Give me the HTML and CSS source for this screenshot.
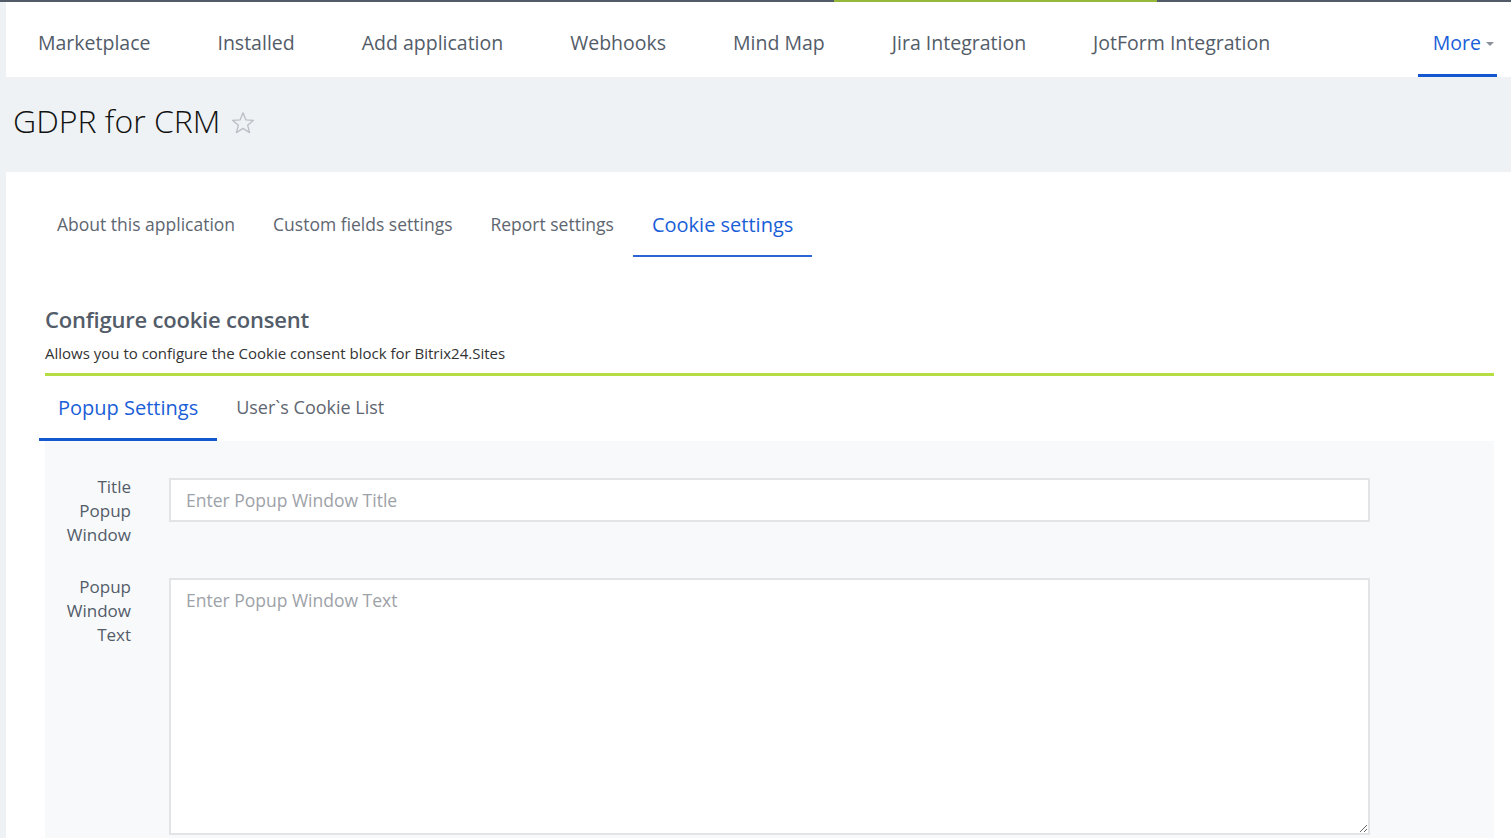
FILE: index.html
```html
<!DOCTYPE html>
<html lang="en">
<head>
<meta charset="utf-8">
<title>GDPR for CRM</title>
<link rel="stylesheet" href="styles.css">
</head>
<body>
<div class="topline"></div>
<nav class="topnav">
  <a class="nav-item">Marketplace</a>
  <a class="nav-item">Installed</a>
  <a class="nav-item">Add application</a>
  <a class="nav-item">Webhooks</a>
  <a class="nav-item">Mind Map</a>
  <a class="nav-item">Jira Integration</a>
  <a class="nav-item">JotForm Integration</a>
  <a class="nav-item nav-more">More<span class="caret"></span></a>
</nav>
<header class="page-head">
  <h1 class="page-title">GDPR for CRM</h1>
  <svg class="star" width="24" height="24" viewBox="0 0 24 24"><path d="M12 1.8l2.9 7.1 7.6.4-5.9 4.9 2 7.4L12 17.4l-6.6 4.2 2-7.4-5.9-4.9 7.6-.4z" fill="none" stroke="#b9bfc5" stroke-width="1.3" stroke-linejoin="round"/></svg>
</header>
<main class="panel">
  <div class="tabs">
    <a class="tab">About this application</a>
    <a class="tab">Custom fields settings</a>
    <a class="tab">Report settings</a>
    <a class="tab tab-active">Cookie settings</a>
  </div>
  <section class="section">
    <h2 class="section-title">Configure cookie consent</h2>
    <p class="section-desc">Allows you to configure the Cookie consent block for Bitrix24.Sites</p>
    <div class="subtabs">
      <a class="subtab subtab-active">Popup Settings</a>
      <a class="subtab">User`s Cookie List</a>
    </div>
    <div class="form">
      <div class="form-row">
        <label class="form-label">Title Popup Window</label>
        <input class="form-input" type="text" placeholder="Enter Popup Window Title">
      </div>
      <div class="form-row">
        <label class="form-label">Popup Window Text</label>
        <textarea class="form-textarea" placeholder="Enter Popup Window Text"></textarea>
      </div>
    </div>
  </section>
</main>
</body>
</html>
```

FILE: styles.css
```css
* { box-sizing: border-box; }
html, body { margin: 0; padding: 0; }
body {
  background: #eef2f4;
  font-family: "Open Sans", "Liberation Sans", sans-serif;
  color: #535c69;
  height: 838px;
  overflow: hidden;
}
.topline {
  height: 2px;
  background: linear-gradient(to right, #525c69 0, #525c69 834px, #95b83a 834px, #95b83a 1157px, #525c69 1157px);
}
.topnav {
  margin-left: 6px;
  height: 75px;
  background: #fff;
  display: flex;
  align-items: stretch;
  padding-left: 32px;
  padding-right: 14px;
  gap: 67px;
}
.nav-item {
  display: flex;
  align-items: center;
  font-size: 19.5px;
  color: #535c69;
  padding-top: 9px;
  border-bottom: 3px solid transparent;
  white-space: nowrap;
}
.nav-more {
  margin-left: auto;
  color: #1a5ed8;
  border-bottom-color: #1458d0;
  padding-left: 15px;
  padding-right: 3px;
}
.caret {
  display: inline-block;
  margin-left: 5px;
  margin-top: 2px;
  border-left: 4px solid transparent;
  border-right: 4px solid transparent;
  border-top: 4px solid #8a9099;
}
.page-head {
  height: 95px;
  display: flex;
  align-items: center;
  padding-left: 13px;
  padding-bottom: 8px;
  gap: 11px;
}
.page-title {
  margin: 0;
  font-size: 32px;
  font-weight: 300;
  color: #111;
}
.star { margin-top: 4px; }
.panel {
  margin-left: 6px;
  background: #fff;
  height: 666px;
  padding: 21px 17px 0 32px;
}
.tabs {
  display: flex;
  align-items: stretch;
}
.tab {
  height: 64px;
  display: flex;
  align-items: center;
  padding: 0 19px;
  font-size: 17.5px;
  color: #5e6671;
  border-bottom: 2px solid transparent;
  white-space: nowrap;
}
.tab-active {
  font-size: 20px;
  color: #1a5ed8;
  border-bottom-color: #2b66d6;
}
.section {
  padding-left: 7px;
}
.section-title {
  margin: 47px 0 0;
  font-size: 22px;
  font-weight: 600;
  color: #535c69;
  line-height: 30px;
  letter-spacing: -0.2px;
}
.section-desc {
  margin: 9px 0 0;
  font-size: 15px;
  color: #333;
  line-height: 20px;
  padding-bottom: 10px;
  border-bottom: 3px solid #b7dd44;
}
.subtabs {
  display: flex;
  margin-left: -6px;
}
.subtab {
  height: 65px;
  display: flex;
  align-items: center;
  padding: 0 19px;
  font-size: 18px;
  color: #5e6671;
  border-bottom: 3px solid transparent;
  white-space: nowrap;
}
.subtab-active {
  font-size: 20px;
  color: #1a5ed8;
  border-bottom-color: #1458d0;
}
.form {
  background: #f8f9fb;
  padding: 34px 124px 0 0;
  display: flex;
  flex-direction: column;
  gap: 28px;
  height: 400px;
}
.form-row {
  display: grid;
  grid-template-columns: 86px 1fr;
  column-gap: 38px;
  align-items: start;
}
.form-label {
  text-align: right;
  font-size: 17px;
  line-height: 24px;
  color: #535c69;
}
.form-input, .form-textarea {
  margin-top: 3px;
  width: 100%;
  border: 2px solid #e2e4e6;
  background: #fff;
  font-family: "Open Sans", "Liberation Sans", sans-serif;
  font-size: 17.5px;
  color: #333;
  padding: 0 15px;
  outline: none;
}
.form-input { height: 44px; }
.form-textarea {
  height: 257px;
  padding-top: 8px;
  line-height: 24px;
  resize: vertical;
}
.form-input::placeholder, .form-textarea::placeholder { color: #9da2a8; }
```
